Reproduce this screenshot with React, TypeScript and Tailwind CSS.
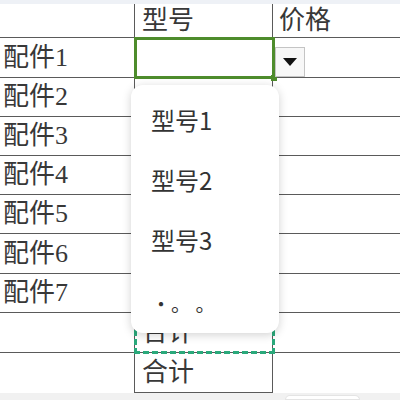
const rowHeights = [40, 39, 39, 39, 39, 40, 39, 40, 40];
const labels = ["配件1", "配件2", "配件3", "配件4", "配件5", "配件6", "配件7", "", ""];
const options = ["型号1", "型号2", "型号3"];

const sheetFont = { fontFamily: '"Liberation Serif", "Noto Sans CJK SC", serif' };

export default function App() {
  return (
    <div className="relative h-[400px] w-[400px] overflow-hidden bg-white text-[#383838]" style={sheetFont}>
      <div className="h-[4px] bg-[#eef1f6]" />

      {/* header row */}
      <div className="grid h-[34px] grid-cols-[135px_138px_127px] border-b border-[#5a5a5a]">
        <div className="border-r border-[#5a5a5a]" />
        <div className="flex items-center border-r border-[#5a5a5a] pl-[7px] text-[26px] leading-none">型号</div>
        <div className="flex items-center pl-[6px] text-[26px] leading-none">价格</div>
      </div>

      {/* body rows */}
      {rowHeights.map((h, i) => {
        const last = i === rowHeights.length - 1;
        return (
          <div key={i} className="grid grid-cols-[135px_138px_127px]" style={{ height: h + "px" }}>
            <div
              className={
                "flex items-center border-r border-[#5a5a5a] pl-[3px] text-[26px] leading-none " +
                (last ? "" : "border-b")
              }
            >
              {labels[i]}
            </div>
            <div className="flex items-center border-r border-b border-[#5a5a5a] pl-[7px] text-[26px] leading-none">
              {i >= 7 ? "合计" : ""}
            </div>
            <div className={last ? "" : "border-b border-[#5a5a5a]"} />
          </div>
        );
      })}

      <div className="flex h-[7px] bg-[#f1f1f1]">
        <div className="ml-[285px] mt-[2px] h-[5px] w-[75px] rounded-t-md border border-[#e4e4e4] bg-white" />
      </div>

      {/* selected cell */}
      <div className="absolute left-[134px] top-[37px] h-[42px] w-[141px] border-[3px] border-[#4e8c2c]" />
      <div className="absolute left-[271px] top-[75px] h-[6px] w-[6px] bg-[#4e8c2c]" />

      {/* dropdown button */}
      <div className="absolute left-[275px] top-[47px] flex h-[30px] w-[30px] items-center justify-center border border-[#c4c4c4] bg-[#f7f7f7]">
        <svg width="14" height="8" viewBox="0 0 14 8">
          <path d="M0 0 L14 0 L7 8 Z" fill="#111" />
        </svg>
      </div>

      {/* copy marquee */}
      <div className="absolute left-[134px] top-[312px] h-[42px] w-[141px] border-[3px] border-dashed border-[#2aa97b]" />

      {/* dropdown list */}
      <div
        className="absolute left-[131px] top-[85px] h-[248px] w-[148px] rounded-[12px] bg-white shadow-[0_2px_10px_rgba(0,0,0,0.18)]"
        style={{ fontFamily: '"Noto Sans CJK SC", sans-serif' }}
      >
        <div className="flex flex-col pl-[20px] pt-[19px] text-[24px] leading-[32px] text-[#333]">
          {options.map((o) => (
            <div key={o} className="h-[60px]">{o}</div>
          ))}
          <div className="mt-[4px] text-[20px]">·。 。</div>
        </div>
      </div>
    </div>
  );
}
